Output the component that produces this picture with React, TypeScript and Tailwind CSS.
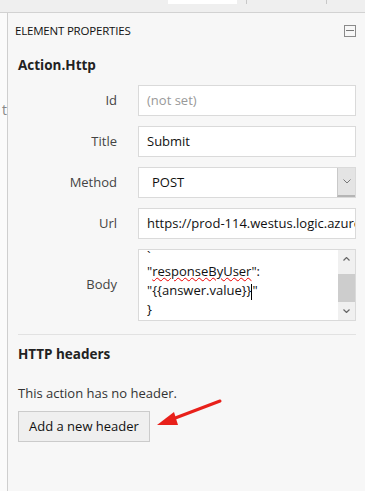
const font = { fontFamily: '"Open Sans", "Noto Sans", sans-serif' };

const Field = ({ label, children }: { label: string; children: React.ReactNode }) => (
  <div className="grid grid-cols-[99px_1fr] gap-x-[21px] items-center mb-[10px]">
    <span className="text-right text-[13px] text-[#444]">{label}</span>
    {children}
  </div>
);

export default function App() {
  return (
    <div className="w-[365px] h-[491px] overflow-hidden bg-[#f7f7f7] relative" style={font}>
      {/* tab strip */}
      <div className="h-[13px] bg-[#efefef] border-b border-[#d2d2d2] flex items-start">
        <div className="ml-[168px] w-[69px] h-[4px] bg-white" />
        <div className="ml-[9px] w-px h-[4px] bg-[#c8c8c8]" />
        <div className="ml-[79px] w-px h-[4px] bg-[#c8c8c8]" />
      </div>

      <div className="flex h-[478px]">
        <div className="w-[8px] bg-[#fbfbfb] border-r border-[#cfcfcf] relative">
          <span className="absolute left-[2px] top-[86px] text-[14px] text-[#888]">t</span>
        </div>

        <div className="flex-1 pr-[9px]">
          <div className="flex items-center justify-between pl-[7px] h-[35px]">
            <span className="text-[11.5px] text-[#111] tracking-[-0.2px]">ELEMENT PROPERTIES</span>
            <span className="w-[12px] h-[12px] border border-[#8a8a8a] flex items-center justify-center">
              <span className="w-[8px] h-px bg-[#777]" />
            </span>
          </div>

          <div className="pl-[10px]">
            <h2 className="text-[13.5px] leading-[21px] font-bold text-[#222] mt-[7px] mb-[9px]">Action.Http</h2>

            <Field label="Id">
              <div className="h-[31px] border border-[#dadada] bg-white px-[8px] flex items-center text-[13px] text-[#999]">
                (not set)
              </div>
            </Field>
            <Field label="Title">
              <div className="h-[31px] border border-[#dadada] bg-white px-[8px] flex items-center text-[13px] text-[#111]">
                Submit
              </div>
            </Field>
            <Field label="Method">
              <div className="h-[31px] border border-[#dadada] bg-white flex items-stretch text-[13px] text-[#111]">
                <span className="flex-1 flex items-center pl-[13px]">POST</span>
                <span className="w-[18px] bg-[#e4e4e4] border-l border-[#c9c9c9] border-b-2 border-b-[#b5b5b5] flex items-center justify-center">
                  <svg width="8" height="5" viewBox="0 0 8 5">
                    <path d="M0.5 0.5 L4 4 L7.5 0.5" fill="none" stroke="#777" strokeWidth="1" />
                  </svg>
                </span>
              </div>
            </Field>
            <Field label="Url">
              <div className="h-[31px] border border-[#dadada] bg-white pl-[8px] flex items-center text-[13px] text-[#111] overflow-hidden whitespace-nowrap">
                https://prod-114.westus.logic.azure.com
              </div>
            </Field>
            <div className="grid grid-cols-[99px_1fr] gap-x-[21px] items-center mt-[2px]">
              <span className="text-right text-[13px] text-[#444]">Body</span>
              <div className="h-[72px] border border-[#dadada] bg-white flex overflow-hidden">
                <div className="flex-1 pl-[8px] text-[13px] leading-[19px] text-[#111]">
                  <div className="h-[12px] leading-[12px]">`</div>
                  <div>
                    "<span className="underline decoration-wavy decoration-[#e00] decoration-1">responseByUser</span>":
                  </div>
                  <div>
                    "&#123;&#123;answer.value&#125;&#125;<span className="inline-block w-px h-[16px] bg-black align-middle" />"
                  </div>
                  <div>&#125;</div>
                </div>
                <div className="w-[17px] bg-[#f0f0f0] flex flex-col">
                  <div className="h-[18px] flex items-center justify-center">
                    <svg width="7" height="4" viewBox="0 0 7 4">
                      <path d="M0.5 3.5 L3.5 0.5 L6.5 3.5" fill="none" stroke="#666" strokeWidth="1.2" />
                    </svg>
                  </div>
                  <div className="h-[6px]" />
                  <div className="h-[28px] bg-[#cdcdcd]" />
                  <div className="flex-1 flex items-center justify-center">
                    <svg width="7" height="4" viewBox="0 0 7 4">
                      <path d="M0.5 0.5 L3.5 3.5 L6.5 0.5" fill="none" stroke="#666" strokeWidth="1.2" />
                    </svg>
                  </div>
                </div>
              </div>
            </div>

            <div className="border-t border-[#e2e2e2] mt-[13px] pt-[9px]">
              <h3 className="text-[13.5px] leading-[21px] font-bold text-[#222]">HTTP headers</h3>
              <p className="text-[13px] leading-[21px] text-[#333] mt-[18px]">This action has no header.</p>
              <button className="mt-[7px] h-[31px] px-[10px] bg-[#efefef] border border-[#cbcbcb] text-[13px] text-[#111]">
                Add a new header
              </button>
            </div>
          </div>
        </div>
      </div>

      {/* annotation arrow */}
      <svg className="absolute left-[150px] top-[395px]" width="80" height="40" viewBox="0 0 80 40">
        <line x1="70" y1="6" x2="20" y2="25" stroke="#e8201a" strokeWidth="3" strokeLinecap="round" />
        <polygon points="7,30 24,17 28,30" fill="#e8201a" />
      </svg>
    </div>
  );
}
